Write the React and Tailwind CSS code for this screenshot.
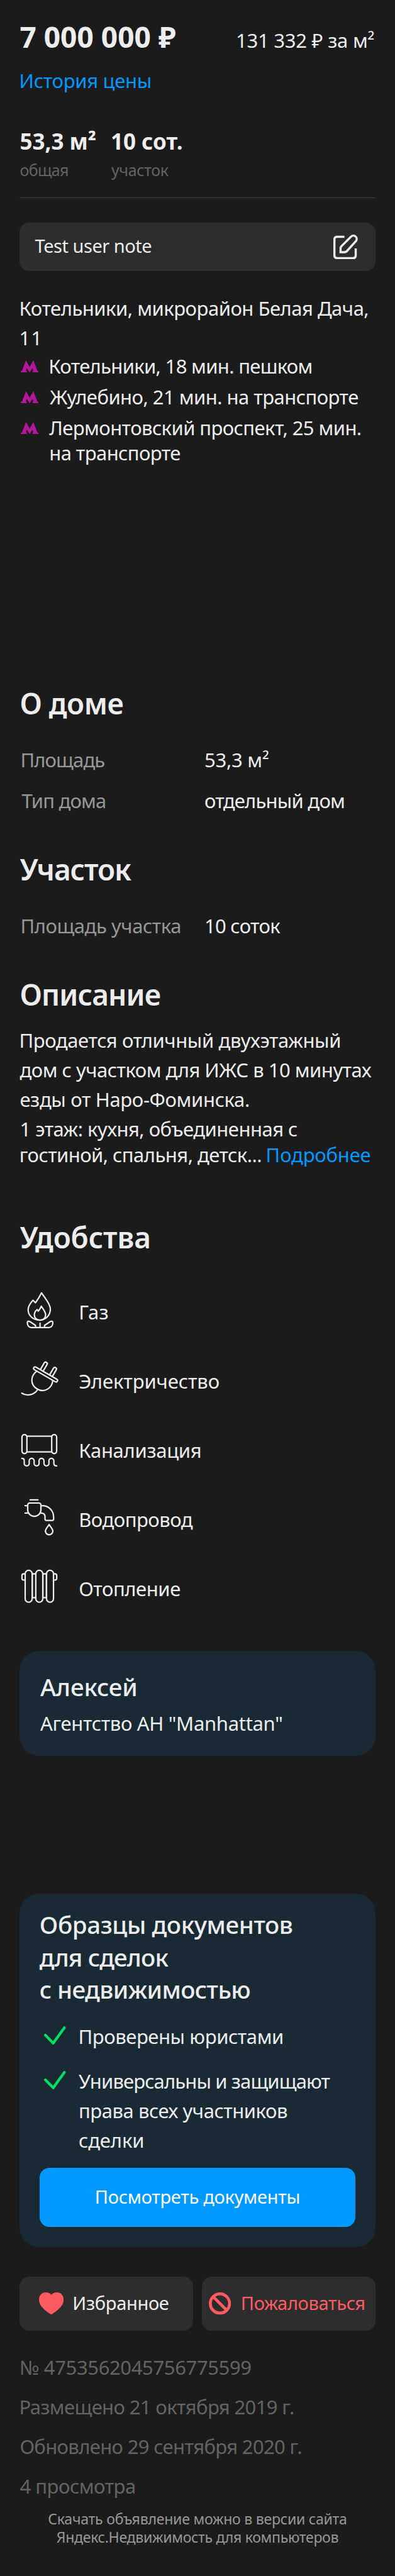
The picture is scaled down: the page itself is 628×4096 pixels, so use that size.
import React from "react";

function EditIcon() {
  return (
    <svg className="h-[39.2px] w-[39.2px] shrink-0" viewBox="0 0 40 40" fill="none" stroke="#ededed" strokeWidth="3.5">
      <path d="M18 3.5H6.5Q1.7 3.5 1.7 8V34Q1.7 38.3 6.5 38.3H32Q36.3 38.3 36.3 34V22.5" />
      <path d="M11.7 28.5V22.5Q11.7 20.5 13 19L28.4 3.6A5.2 5.2 0 0 1 36.6 10.6L22 26.8Q20.3 28.5 18 28.5Z" />
    </svg>
  );
}

function MetroIcon() {
  return (
    <svg className="mt-[11px] ml-[1.5px] h-[19.4px] w-[28.4px] shrink-0" viewBox="0 0 28.9 19.7" fill="#b4169c">
      <path d="M8.4 0 14.4 10.6 20.4 0 26.9 17H28.9V19.7H19V17H20.4L19 12.5 14.4 19.7 9.8 12.5 8.4 17H9.9V19.7H0V17H2Z" />
    </svg>
  );
}

function AmenityIcon({ children }) {
  return (
    <svg
      className="mb-[4.5px] h-[62.8px] w-[62.8px] shrink-0"
      viewBox="0 0 64 64"
      fill="none"
      stroke="#ededed"
      strokeWidth="2.3"
      strokeLinecap="round"
      strokeLinejoin="round"
    >
      {children}
    </svg>
  );
}

const amenities = [
  {
    label: "Газ",
    track: "tracking-[0.3px]",
    icon: (
      <>
        <path d="M35.7 2.7C40 10 50 20 50 29C50 39 42.5 47 32.5 47C22 47 14 39.5 14 30C14 24 18 19 21.8 14.8L25.8 18.8C29.5 14 33 8 35.7 2.7Z" />
        <path d="M35.3 24.3C37.5 28.5 42.3 33 42.3 38.5C42.3 43.5 38.5 47 33.3 47C28 47 24 43.5 24 38.5C24 35 26 32 28.5 29.8L30.5 32.3C32.5 30 34.2 27 35.3 24.3Z" />
        <path d="M19 59C15 59 12.7 55.5 12.7 51C12.7 48.5 15 48.2 17 49.5L26 55.5V59M47.6 59C51.6 59 54 55.5 54 51C54 48.5 51.6 48.2 49.6 49.5L40.6 55.5V59M19 59H47.6M33.3 52V59" />
      </>
    ),
  },
  {
    label: "Электричество",
    track: "tracking-[-0.09px]",
    icon: (
      <>
        <g transform="translate(42.3 22.8) rotate(30)">
          <rect x="-22" y="-2.3" width="44" height="4.8" rx="2.4" />
          <path d="M-11.2-2.3V-15A2.6 2.6 0 0 1-6-15V-2.3M6-2.3V-15A2.6 2.6 0 0 1 11.2-15V-2.3" />
          <path d="M-15 2.5C-20 14-14 27.3 0 27.3C14 27.3 20 14 15 2.5" />
        </g>
        <path d="M29.3 47.8C23 56.5 12 58.5 3.7 53.3" />
      </>
    ),
  },
  {
    label: "Канализация",
    track: "tracking-[-0.3px]",
    icon: (
      <>
        <rect x="4" y="8.2" width="8" height="30.8" rx="4" />
        <rect x="52.2" y="8.2" width="8" height="30.8" rx="4" />
        <path d="M12 10.9H52.2M12 36.3H52.2" />
        <path d="M3.7 46.7C6.5 46.7 7.7 48.5 7.7 51V55A4 4 0 0 0 15.7 55V50.7A4 4 0 0 1 23.7 50.7V55A4 4 0 0 0 31.7 55V50.7A4 4 0 0 1 39.7 50.7V55A4 4 0 0 0 47.7 55V50.7A4 4 0 0 1 55.7 50.7V55C55.7 57.5 57.5 59 60.3 59" />
      </>
    ),
  },
  {
    label: "Водопровод",
    track: "tracking-[-0.5px]",
    icon: (
      <>
        <path d="M17.2 3H30" />
        <path d="M16.5 8H31.5A3.2 3.2 0 0 1 34.7 11.2V19A10.7 10.7 0 0 1 13.3 19V11.2A3.2 3.2 0 0 1 16.5 8Z" />
        <path d="M9 12.3H13.3M9 24.3H13.3" />
        <path d="M34.7 12.3H37C47 12.3 55.3 20 55.3 31V34Q55.3 36.4 53 36.4H43.6Q41.3 36.4 41.3 34V30C41.3 26.5 39 24.3 34.7 24.3" />
        <path d="M48 43C50.5 47 54 50 54 53.5A6 6 0 0 1 42 53.5C42 50 45.5 47 48 43Z" />
      </>
    ),
  },
  {
    label: "Отопление",
    track: "tracking-[-0.44px]",
    icon: (
      <>
        <rect x="9.2" y="5" width="11.3" height="51.6" rx="5.6" />
        <rect x="26.4" y="5" width="11.3" height="51.6" rx="5.6" />
        <rect x="43.8" y="5" width="11.3" height="51.6" rx="5.6" />
        <path d="M20.5 10.7H26.4M37.7 10.7H43.8M20.5 49.3H26.4M37.7 49.3H43.8" />
        <path d="M21.8 10.7V49.3M39 10.7V49.3M42.4 10.7V49.3" strokeOpacity="0.4" strokeWidth="1.4" />
        <path d="M9.2 10.7H7Q4 10.7 4 13.5V18Q4 20.7 7 20.7H9.2M55.1 10.7H57.3Q60.3 10.7 60.3 13.5V18Q60.3 20.7 57.3 20.7H55.1" />
      </>
    ),
  },
];

function Heading({ className, children }) {
  return <h2 className={`h-[60px] text-[46px] leading-[60px] font-semibold ${className}`}>{children}</h2>;
}

function Spec({ label, value, className = "", labelClass = "", valueClass = "" }) {
  return (
    <div className={`flex h-[40px] leading-[40px] ${className}`}>
      <dt className={`w-[292.5px] shrink-0 text-[#979797] ${labelClass}`}>{label}</dt>
      <dd className={valueClass}>{value}</dd>
    </div>
  );
}

function Check() {
  return (
    <svg
      className="mt-[6.5px] mr-[20px] ml-[7.7px] h-[29.4px] w-[34.5px] shrink-0"
      viewBox="0 0 35.2 30"
      fill="none"
      stroke="#04df63"
      strokeWidth="4.4"
      strokeLinecap="round"
      strokeLinejoin="round"
    >
      <path d="M2.2 14.4 14.9 27.3 33 2.2" />
    </svg>
  );
}

export default function App() {
  return (
    <main className="h-[4096px] w-[628px] overflow-hidden bg-[#1b1b1b] px-[31.4px] pt-[28px] font-['Noto_Sans',sans-serif] text-[31px] whitespace-nowrap text-[#ededed]">
      <header>
        <div className="flex h-[60px] items-baseline justify-between leading-[60px]">
          <span className="text-[46px] font-bold tracking-[0.05px]">7 000 000 ₽</span>
          <span className="mr-[1.5px] tracking-[-0.24px]">131 332 ₽ за м²</span>
        </div>
        <a className="mt-[20px] -ml-[0.8px] block h-[40px] leading-[40px] tracking-[-0.3px] text-[#0099ff]">История цены</a>
      </header>

      <div className="mt-[55px] flex">
        <div className="w-[144.5px]">
          <div className="h-[44px] text-[35px] leading-[44px] font-bold">53,3 м²</div>
          <div className="mt-[6px] h-[34px] text-[25px] leading-[34px] tracking-[-0.6px] text-[#636363]">общая</div>
        </div>
        <div>
          <div className="h-[44px] text-[35px] leading-[44px] font-bold">10 сот.</div>
          <div className="mt-[6px] ml-[1px] h-[34px] text-[25px] leading-[34px] tracking-[-0.33px] text-[#636363]">участок</div>
        </div>
      </div>

      <hr className="mt-[27px] h-px border-0 bg-[#3e3e3e]" />

      <div className="mt-[39px] flex h-[77px] items-center justify-between rounded-[15.7px] bg-[#2d2d2d] pr-[27.5px] pl-[24.2px]">
        <span className="pb-[4px] text-[29px] tracking-[-0.48px]">Test user note</span>
        <EditIcon />
      </div>

      <address className="mt-[35.5px] -ml-[0.8px] h-[94px] leading-[47px] not-italic">
        <div className="tracking-[-0.49px]">Котельники, микрорайон Белая Дача,</div>
        <div className="tracking-[0.8px]">11</div>
      </address>
      <ul className="mt-[1.5px] flex flex-col gap-[9px] leading-[40px]">
        <li className="flex">
          <MetroIcon />
          <span className="ml-[16px] tracking-[-0.68px]">Котельники, 18 мин. пешком</span>
        </li>
        <li className="flex">
          <MetroIcon />
          <span className="ml-[18px] tracking-[-0.53px]">Жулебино, 21 мин. на транспорте</span>
        </li>
        <li className="flex">
          <MetroIcon />
          <span className="ml-[17px] tracking-[-0.58px]">
            Лермонтовский проспект, 25 мин.
            <br />
            на транспорте
          </span>
        </li>
      </ul>

      <Heading className="mt-[348px] tracking-[-0.5px]">О доме</Heading>
      <dl className="mt-[40px] ml-[1px]">
        <Spec label="Площадь" value="53,3 м²" labelClass="tracking-[-0.87px]" valueClass="tracking-[-0.22px]" />
        <Spec className="mt-[25px]" label="Тип дома" value="отдельный дом" labelClass="pl-[2px] tracking-[-0.84px]" valueClass="tracking-[-0.77px]" />
      </dl>

      <Heading className="mt-[59px] tracking-[-1.1px]">Участок</Heading>
      <dl className="mt-[40px] ml-[1px]">
        <Spec label="Площадь участка" value="10 соток" labelClass="tracking-[-0.44px]" valueClass="tracking-[-0.69px]" />
      </dl>

      <Heading className="mt-[59px] tracking-[-0.86px]">Описание</Heading>
      <div className="mt-[20px] leading-[47px]">
        <div className="-ml-[1px] tracking-[-0.4px]">Продается отличный двухэтажный</div>
        <div className="tracking-[-0.49px]">дом с участком для ИЖС в 10 минутах</div>
        <div className="tracking-[-0.35px]">езды от Наро-Фоминска.</div>
        <div className="tracking-[-0.52px]">1 этаж: кухня, объединенная с</div>
        <div className="-ml-[0.6px] flex h-[35px] leading-[35px]">
          <span className="w-[391.8px] tracking-[-0.54px]">гостиной, спальня, детск...</span>
          <a className="tracking-[-0.19px] text-[#0099ff]">Подробнее</a>
        </div>
      </div>

      <Heading className="mt-[83px] tracking-[-0.15px]">Удобства</Heading>
      <ul className="mt-[34.5px]">
        {amenities.map((a) => (
          <li key={a.label} className="flex h-[109.9px] items-center gap-[31px] leading-[40px]">
            <AmenityIcon>{a.icon}</AmenityIcon>
            <span className={a.track}>{a.label}</span>
          </li>
        ))}
      </ul>

      <section className="mt-[44px] h-[167px] rounded-[31.4px] bg-[#192a35] pt-[32.5px] pl-[32.6px]">
        <div className="h-[50px] text-[38.5px] leading-[50px] font-medium tracking-[-0.13px]">Алексей</div>
        <div className="mt-[13px] h-[40px] leading-[40px] tracking-[-0.31px]">Агентство АН "Manhattan"</div>
      </section>

      <section className="mt-[219px] h-[562px] rounded-[31.4px] bg-[#192a35] px-[31.4px] pt-[24.5px]">
        <h3 className="h-[153.6px] text-[38.5px] leading-[51.2px] font-medium">
          <div className="tracking-[-0.38px]">Образцы документов</div>
          <div className="tracking-[-0.83px]">для сделок</div>
          <div className="tracking-[-0.58px]">с недвижимостью</div>
        </h3>
        <ul className="mt-[26px] leading-[47px]">
          <li className="flex">
            <Check />
            <span className="-ml-[0.5px] tracking-[-0.42px]">Проверены юристами</span>
          </li>
          <li className="mt-[24px] flex">
            <Check />
            <div>
              <div className="tracking-[-0.88px]">Универсальны и защищают</div>
              <div className="tracking-[-0.45px]">права всех участников</div>
              <div className="tracking-[-0.11px]">сделки</div>
            </div>
          </li>
        </ul>
        <button className="mt-[20px] flex h-[94px] w-full items-center justify-center rounded-[15.7px] bg-[#0099ff] pb-[3px] text-[29px] tracking-[-0.28px] text-white">
          Посмотреть документы
        </button>
      </section>

      <div className="mt-[47px] grid grid-cols-[275.7px_275.7px] gap-[13.8px] text-[29px]">
        <button className="flex h-[86px] items-center rounded-[15.7px] bg-[#2d2d2d] pl-[30.4px]">
          <svg className="h-[35.3px] w-[39.2px] shrink-0" viewBox="0 0 40 36" fill="#ff5b61">
            <path d="M20 4C17 .5 13.5 0 11 0C4.5 0 0 5 0 12C0 22 10 30 20 36C30 30 40 22 40 12C40 5 35.5 0 29 0C26.5 0 23 .5 20 4Z" />
          </svg>
          <span className="ml-[14.4px] pb-[3px] tracking-[-0.31px]">Избранное</span>
        </button>
        <button className="flex h-[86px] items-center rounded-[15.7px] bg-[#2d2d2d] pl-[10.8px] text-[#ff5b61]">
          <svg className="h-[35.3px] w-[35.3px] shrink-0" viewBox="0 0 36 36" fill="none" stroke="#ff5b61" strokeWidth="4.8">
            <circle cx="18" cy="18" r="15.6" />
            <path d="M7 7 29 29" />
          </svg>
          <span className="ml-[15.8px] pb-[3px] tracking-[-0.33px]">Пожаловаться</span>
        </button>
      </div>

      <div className="mt-[27.4px] leading-[62.8px] text-[#636363]">
        <div className="-ml-[0.5px] tracking-[-0.37px]">№ 4753562045756775599</div>
        <div className="-ml-[1px] tracking-[-0.63px]">Размещено 21 октября 2019 г.</div>
        <div className="tracking-[-0.65px]">Обновлено 29 сентября 2020 г.</div>
        <div className="tracking-[-0.47px]">4 просмотра</div>
      </div>
      <footer className="mt-[6px] text-center text-[23.1px] leading-[29.8px] text-[#979797]">
        <div className="tracking-[-0.26px]">Скачать объявление можно в версии сайта</div>
        <div className="tracking-[-0.32px]">Яндекс.Недвижимость для компьютеров</div>
      </footer>
    </main>
  );
}
